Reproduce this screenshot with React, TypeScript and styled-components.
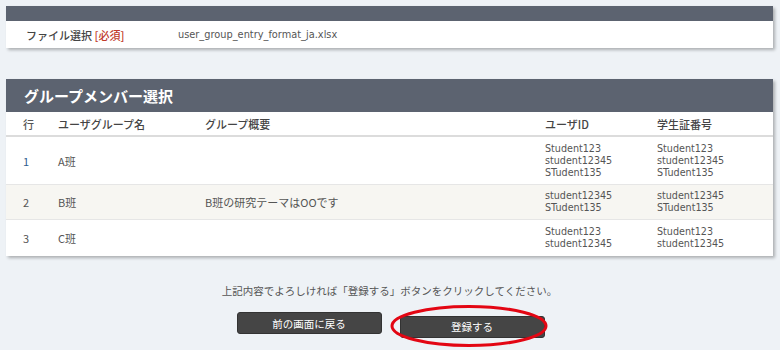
import React from 'react';
import styled, { createGlobalStyle } from 'styled-components';

const GlobalStyle = createGlobalStyle`
  html, body {
    margin: 0;
    padding: 0;
    background: #eef2f6;
    font-family: "Noto Sans CJK JP", "DejaVu Sans", sans-serif;
    color: #555;
  }
`;

const Page = styled.div`
  width: 780px;
  height: 350px;
  padding: 6px 7px 0 6px;
  box-sizing: border-box;
  overflow: hidden;
`;

const Card = styled.div<{ $gap?: number }>`
  background: #fff;
  box-shadow: 2px 2px 3px rgba(0, 0, 0, 0.28);
  margin-bottom: ${props => props.$gap || 0}px;
`;

const CardHead = styled.div<{ $h: number }>`
  height: ${props => props.$h}px;
  background: #5c6370;
  color: #fff;
  font-size: 15px;
  font-weight: bold;
  display: flex;
  align-items: center;
  padding-left: 18px;
`;

const FileRow = styled.div`
  height: 27px;
  display: flex;
  align-items: center;
  font-size: 11px;
`;

const FileLabel = styled.div`
  width: 152px;
  padding-left: 20px;
  color: #444;
  font-weight: 500;
`;

const Required = styled.span`
  color: #c0392b;
`;

const FileName = styled.div`
  font-family: "DejaVu Sans", sans-serif;
  font-size: 9.8px;
  color: #555;
`;

const Grid = styled.div<{ $h: number; $alt?: boolean; $head?: boolean }>`
  display: grid;
  grid-template-columns: 38px 147px 340px 112px 1fr;
  align-items: center;
  height: ${props => props.$h}px;
  box-sizing: border-box;
  padding-left: 14px;
  background: ${props => (props.$alt ? '#f7f6f2' : '#fff')};
  border-bottom: ${props => (props.$head ? '2px solid #dcdcdc' : '1px solid #e6e6e6')};
  font-size: 11px;
  color: ${props => (props.$head ? '#444' : '#555')};
  font-weight: ${props => (props.$head ? 500 : 400)};

  &:last-child {
    border-bottom: none;
  }
`;

const Idx = styled.div<{ $link?: boolean }>`
  color: ${props => (props.$link ? '#2f5d8e' : '#555')};
  padding-left: 3px;
`;

const Ids = styled.div`
  font-family: "DejaVu Sans", sans-serif;
  font-size: 9.6px;
  line-height: 12px;
  color: #555;
`;

const Note = styled.p`
  margin: 27px 0 0;
  text-align: center;
  font-size: 10.5px;
  color: #555;
`;

const Buttons = styled.div`
  display: flex;
  justify-content: center;
  gap: 18px;
  margin-top: 14px;
  padding-left: 2px;
`;

const BtnWrap = styled.div`
  position: relative;
`;

const Button = styled.button`
  width: 145px;
  height: 22px;
  background: #454545;
  color: #fff;
  border: 1px solid #333;
  border-radius: 3px;
  font-family: "Noto Sans CJK JP", sans-serif;
  font-size: 10.5px;
  padding: 0;
`;

const Ring = styled.svg`
  position: absolute;
  left: -11px;
  top: -8px;
  width: 160px;
  height: 44px;
  pointer-events: none;
`;

const rows = [
  { no: '1', name: 'A班', desc: '', ids: ['Student123', 'student12345', 'STudent135'], h: 48 },
  { no: '2', name: 'B班', desc: 'B班の研究テーマはOOです', ids: ['student12345', 'STudent135'], h: 35 },
  { no: '3', name: 'C班', desc: '', ids: ['Student123', 'student12345'], h: 36 }
];

const App: React.FC = () => (
  <Page>
    <GlobalStyle />
    <Card $gap={31}>
      <CardHead $h={15} />
      <FileRow>
        <FileLabel>
          ファイル選択 <Required>[必須]</Required>
        </FileLabel>
        <FileName>user_group_entry_format_ja.xlsx</FileName>
      </FileRow>
    </Card>

    <Card>
      <CardHead $h={33}>グループメンバー選択</CardHead>
      <Grid $h={25} $head>
        <Idx>行</Idx>
        <div>ユーザグループ名</div>
        <div>グループ概要</div>
        <div>ユーザID</div>
        <div>学生証番号</div>
      </Grid>
      {rows.map((r, i) => (
        <Grid key={r.no} $h={r.h} $alt={i % 2 === 1}>
          <Idx $link={i === 0}>{r.no}</Idx>
          <div>{r.name}</div>
          <div>{r.desc}</div>
          <Ids>
            {r.ids.map(id => (
              <div key={id}>{id}</div>
            ))}
          </Ids>
          <Ids>
            {r.ids.map(id => (
              <div key={id}>{id}</div>
            ))}
          </Ids>
        </Grid>
      ))}
    </Card>

    <Note>上記内容でよろしければ「登録する」ボタンをクリックしてください。</Note>
    <Buttons>
      <Button>前の画面に戻る</Button>
      <BtnWrap>
        <Button>登録する</Button>
        <Ring viewBox="0 0 160 44">
          <ellipse cx="80" cy="22" rx="77" ry="19.5" fill="none" stroke="#e30613" strokeWidth="3" />
        </Ring>
      </BtnWrap>
    </Buttons>
  </Page>
);

export default App;
